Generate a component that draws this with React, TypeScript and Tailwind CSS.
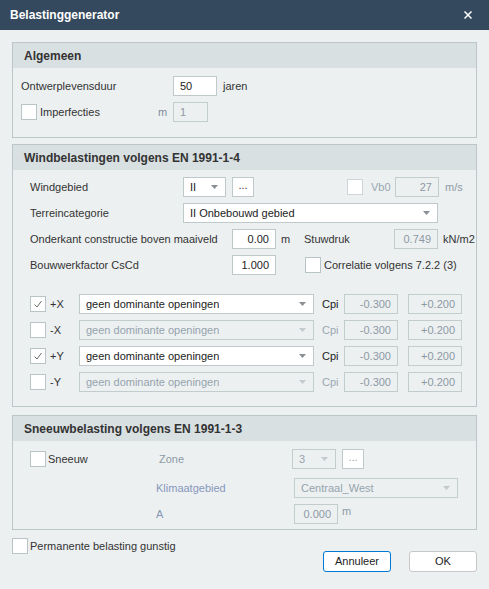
import type { ReactNode } from "react";

const FONT = { fontFamily: '"Liberation Sans", Arial, sans-serif' };

function Check({ checked = false, dim = false }: { checked?: boolean; dim?: boolean }) {
  return (
    <div
      className={`w-[16px] h-[16px] shrink-0 bg-white border flex items-center justify-center ${
        dim ? "border-[#cdd5d7]" : "border-[#b9c4c6]"
      }`}
    >
      {checked && (
        <svg width="12" height="12" viewBox="0 0 12 12">
          <path d="M2.5 6.5 L5 9 L9.5 3" fill="none" stroke="#6b6b6b" strokeWidth="1" />
        </svg>
      )}
    </div>
  );
}

function Field({
  value,
  width,
  disabled = false,
  right = false,
}: {
  value: string;
  width: string;
  disabled?: boolean;
  right?: boolean;
}) {
  return (
    <div
      className={`${width} h-[20px] shrink-0 border flex items-center px-[6px] ${
        disabled ? "border-[#c3cccd] text-[#8d9aa4]" : "bg-white border-[#bfc9ca] text-[#222]"
      } ${right ? "justify-end" : "justify-start"}`}
    >
      {value}
    </div>
  );
}

function Select({ value, width, disabled = false }: { value: string; width: string; disabled?: boolean }) {
  return (
    <div
      className={`${width} h-[20px] shrink-0 border flex items-center justify-between pl-[6px] pr-[7px] ${
        disabled ? "border-[#c3cccd] text-[#95a3ad]" : "bg-white border-[#bfc9ca] text-[#222]"
      }`}
    >
      <span className="truncate">{value}</span>
      <svg width="7" height="4" viewBox="0 0 7 4" className="shrink-0">
        <path d="M0 0 H7 L3.5 4 Z" fill={disabled ? "#c2cacd" : "#8a8f93"} />
      </svg>
    </div>
  );
}

function Dots({ disabled = false }: { disabled?: boolean }) {
  return (
    <div
      className={`w-[22px] h-[20px] shrink-0 bg-white border border-[#bfc9ca] flex items-end justify-center pb-[5px] leading-none ${
        disabled ? "text-[#9aa5ad]" : "text-[#333]"
      }`}
    >
      ...
    </div>
  );
}

function Section({ title, children, className = "" }: { title: string; children: ReactNode; className?: string }) {
  return (
    <div className={`mx-[12px] border border-[#bcc6c8] ${className}`}>
      <div className="h-[25px] bg-[#d9e0e2] flex items-center pl-[11px] font-bold text-[12px] text-[#333]">
        {title}
      </div>
      {children}
    </div>
  );
}

function DirRow({ label, enabled }: { label: string; enabled: boolean }) {
  return (
    <div className="flex items-center h-[20px]">
      <Check checked={enabled} />
      <div className="w-[33px] pl-[4px] text-[#333]">{label}</div>
      <Select value="geen dominante openingen" width="w-[235px]" disabled={!enabled} />
      <div className={`w-[30px] pl-[8px] ${enabled ? "text-[#222]" : "text-[#9aa7b1]"}`}>Cpi</div>
      <Field value="-0.300" width="w-[54px]" disabled right />
      <div className="ml-[10px]">
        <Field value="+0.200" width="w-[54px]" disabled right />
      </div>
    </div>
  );
}

export default function App() {
  return (
    <div className="w-[489px] h-[589px] bg-[#ecf0f1] flex flex-col text-[11px] text-[#333] leading-none" style={FONT}>
      <div className="h-[30px] bg-[#34495e] flex items-center justify-between pl-[10px] pr-[17px] shrink-0">
        <span className="text-white font-bold text-[12px]">Belastinggenerator</span>
        <svg width="8" height="8" viewBox="0 0 8 8">
          <path d="M0.5 0.5 L7.5 7.5 M7.5 0.5 L0.5 7.5" stroke="white" strokeWidth="1.5" />
        </svg>
      </div>

      <Section title="Algemeen" className="mt-[12px]">
        <div className="flex flex-col gap-[6px] pt-[8px] pb-[15px] pl-[8px]">
          <div className="flex items-center h-[20px]">
            <div className="w-[152px]">Ontwerplevensduur</div>
            <Field value="50" width="w-[44px]" />
            <span className="ml-[6px]">jaren</span>
          </div>
          <div className="flex items-center h-[20px]">
            <Check />
            <div className="w-[121px] pl-[3px]">Imperfecties</div>
            <div className="w-[15px] text-[#7f8c9b]">m</div>
            <Field value="1" width="w-[35px]" disabled />
          </div>
        </div>
      </Section>

      <Section title="Windbelastingen volgens EN 1991-1-4" className="mt-[6px]">
        <div className="pt-[7px] pb-[14px] pl-[17px] flex flex-col">
          <div className="flex flex-col gap-[6px]">
            <div className="flex items-center h-[20px]">
              <div className="w-[153px]">Windgebied</div>
              <Select value="II" width="w-[43px]" />
              <div className="ml-[6px]">
                <Dots />
              </div>
              <div className="ml-[93px]">
                <Check dim />
              </div>
              <div className="w-[32px] pl-[8px] text-[#9aa7b1]">Vb0</div>
              <Field value="27" width="w-[44px]" disabled right />
              <span className="ml-[6px] text-[#8d9aa4]">m/s</span>
            </div>
            <div className="flex items-center h-[20px]">
              <div className="w-[153px]">Terreincategorie</div>
              <Select value="II Onbebouwd gebied" width="w-[255px]" />
            </div>
            <div className="flex items-center h-[20px]">
              <div className="w-[202px]">Onderkant constructie boven maaiveld</div>
              <Field value="0.00" width="w-[44px]" right />
              <div className="w-[28px] pl-[5px]">m</div>
              <div className="w-[90px]">Stuwdruk</div>
              <Field value="0.749" width="w-[44px]" disabled right />
              <span className="ml-[5px]">kN/m2</span>
            </div>
            <div className="flex items-center h-[20px]">
              <div className="w-[202px]">Bouwwerkfactor CsCd</div>
              <Field value="1.000" width="w-[44px]" right />
              <div className="ml-[29px]">
                <Check />
              </div>
              <span className="ml-[3px]">Correlatie volgens 7.2.2 (3)</span>
            </div>
          </div>
          <div className="flex flex-col gap-[6px] mt-[19px]">
            <DirRow label="+X" enabled />
            <DirRow label="-X" enabled={false} />
            <DirRow label="+Y" enabled />
            <DirRow label="-Y" enabled={false} />
          </div>
        </div>
      </Section>

      <Section title="Sneeuwbelasting volgens EN 1991-1-3" className="mt-[8px]">
        <div className="pt-[8px] pb-[5px] pl-[17px] flex flex-col">
          <div className="flex items-center h-[20px]">
            <Check />
            <div className="w-[113px] pl-[2px]">Sneeuw</div>
            <div className="w-[133px] text-[#8e9aa6]">Zone</div>
            <Select value="3" width="w-[44px]" disabled />
            <div className="ml-[6px]">
              <Dots disabled />
            </div>
          </div>
          <div className="flex items-center h-[20px] mt-[9px]">
            <div className="w-[126px]" />
            <div className="w-[138px] text-[#8797bd]">Klimaatgebied</div>
            <Select value="Centraal_West" width="w-[164px]" disabled />
          </div>
          <div className="flex items-center h-[20px] mt-[6px]">
            <div className="w-[126px]" />
            <div className="w-[138px] text-[#8797b5]">A</div>
            <Field value="0.000" width="w-[44px]" disabled right />
            <span className="ml-[4px] self-start mt-[2px] text-[#8d9aa4]">m</span>
          </div>
        </div>
      </Section>

      <div className="flex items-start mt-[8px] px-[12px]">
        <Check />
        <span className="ml-[2px] mt-[3px]">Permanente belasting gunstig</span>
        <div className="ml-auto mt-[13px] flex gap-[18px]">
          <div className="w-[68px] h-[21px] bg-white border border-[#0078d4] rounded-[3px] flex items-center justify-center text-[#222]">
            Annuleer
          </div>
          <div className="w-[68px] h-[21px] bg-white border border-[#c8c8c8] rounded-[3px] flex items-center justify-center text-[#222]">
            OK
          </div>
        </div>
      </div>
    </div>
  );
}
